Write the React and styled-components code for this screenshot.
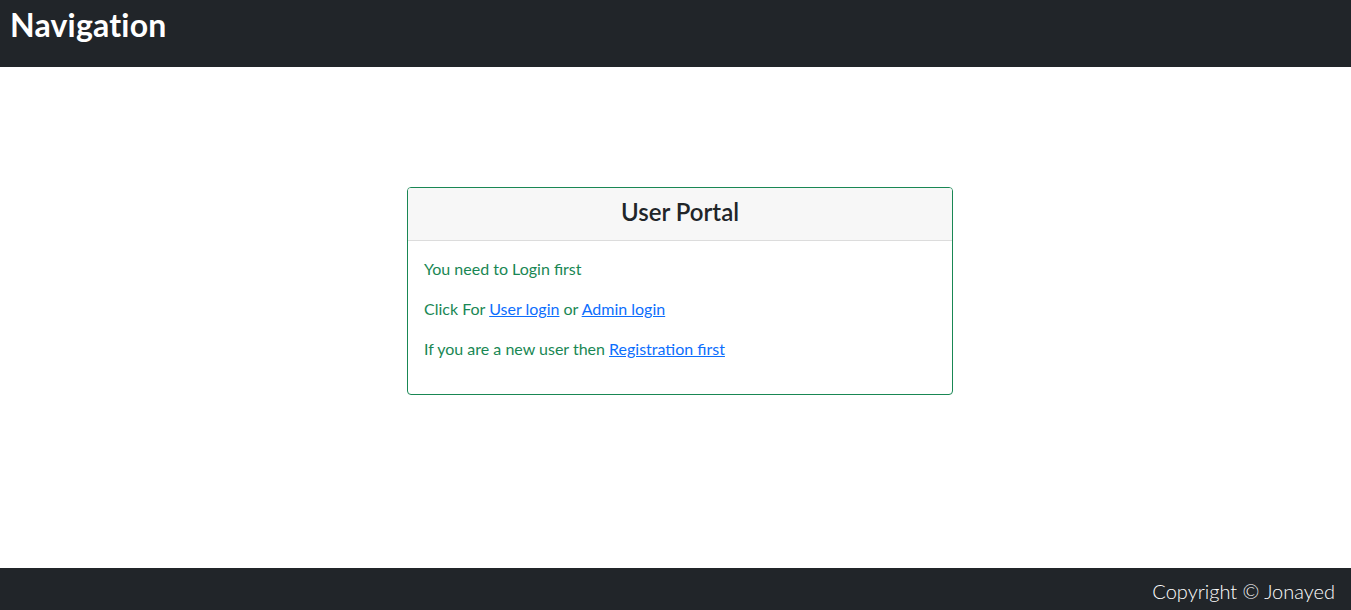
import React from "react";
import styled, { createGlobalStyle } from "styled-components";

const Global = createGlobalStyle`
  html, body { margin: 0; padding: 0; }
  body {
    font-family: "Segoe UI", Lato, "Open Sans", sans-serif;
    font-size: 16px;
    line-height: 1.5;
    color: #212529;
    background: #fff;
  }
  * { box-sizing: border-box; }
`;

const Page = styled.div`
  display: flex;
  flex-direction: column;
  min-height: 610px;
`;

const Header = styled.header`
  background: #212529;
  height: 67px;
  padding: 4px 10px 0;
`;

const Brand = styled.h1`
  margin: 0;
  color: #fff;
  font-size: 32px;
  font-weight: 700;
  line-height: 1.2;
  padding-top: 2px;
  letter-spacing: 0.2px;
`;

const Main = styled.main`
  flex: 1;
  display: flex;
  justify-content: center;
  align-items: flex-start;
  padding: 120px 0 0 9px;
`;

const Card = styled.div`
  width: 546px;
  border: 1px solid #198754;
  border-radius: 4px;
  overflow: hidden;
`;

const CardHeader = styled.div`
  background: #f7f7f7;
  border-bottom: 1px solid #dcdcdc;
  height: 53px;
  padding-bottom: 4px;
  display: flex;
  align-items: center;
  justify-content: center;
`;

const Title = styled.h3`
  margin: 0;
  font-size: 24px;
  font-weight: 600;
  line-height: 1.2;
  color: #212529;
`;

const CardBody = styled.div`
  padding: 16px 16px 17px;
  color: #198754;
  font-size: 16px;
`;

const P = styled.p`
  margin: 0 0 16px;
  line-height: 24px;
`;

const Link = styled.a`
  color: #0d6efd;
  text-decoration: underline;
`;

const Footer = styled.footer`
  background: #212529;
  height: 42px;
  display: flex;
  align-items: center;
  justify-content: flex-end;
  padding: 3px 16px 0 0;
`;

const FooterText = styled.span`
  color: #fff;
  font-size: 20px;
  font-weight: 300;
`;

export default function App() {
  return (
    <>
      <Global />
      <Page>
        <Header>
          <Brand>Navigation</Brand>
        </Header>
        <Main>
          <Card>
            <CardHeader>
              <Title>User Portal</Title>
            </CardHeader>
            <CardBody>
              <P>You need to Login first</P>
              <P>
                Click For <Link href="#">User login</Link> or <Link href="#">Admin login</Link>
              </P>
              <P>
                If you are a new user then <Link href="#">Registration first</Link>
              </P>
            </CardBody>
          </Card>
        </Main>
        <Footer>
          <FooterText>Copyright © Jonayed</FooterText>
        </Footer>
      </Page>
    </>
  );
}
